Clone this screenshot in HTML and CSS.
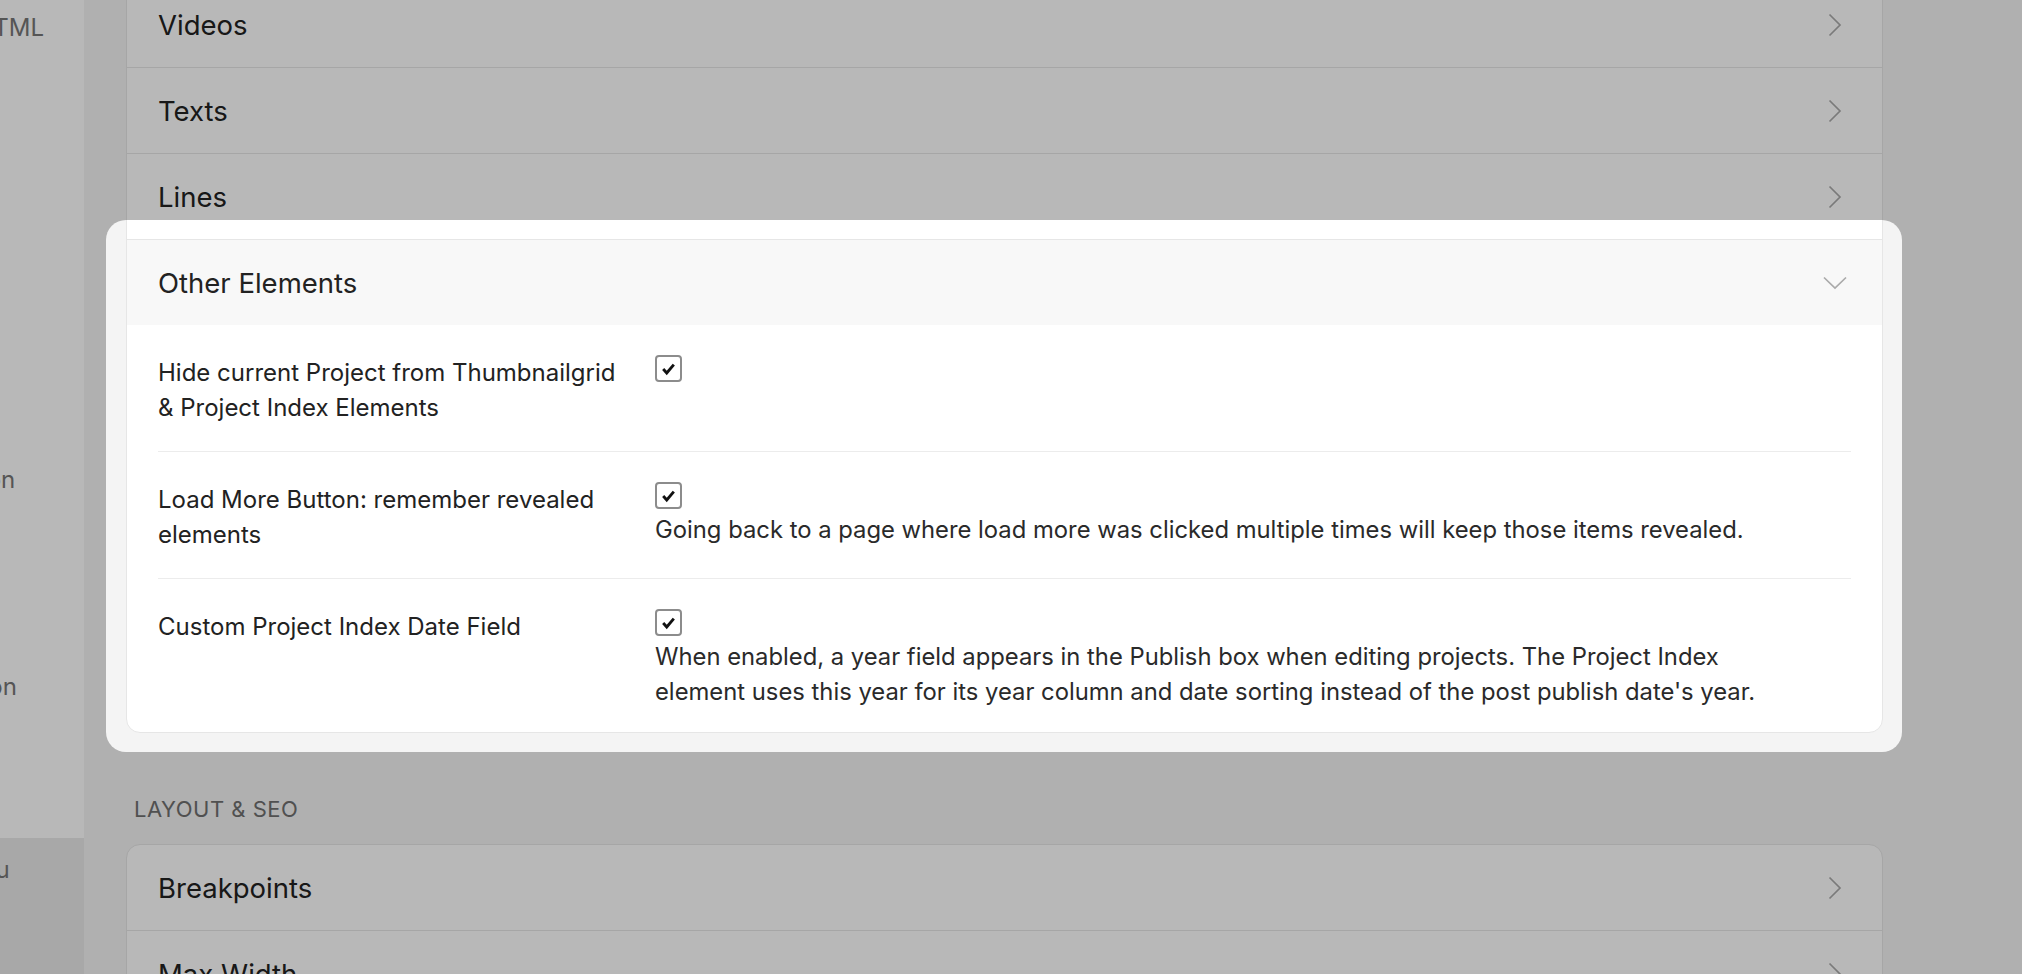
FILE: index.html
```html
<!DOCTYPE html>
<html>
<head>
    <title>Settings - Elements</title>
    <meta name="viewport" content="width=device-width, initial-scale=1">
    <link rel="stylesheet" href="styles.css">
</head>
<body>
    <div class="app">
        <aside class="sidebar">
            <nav class="side-nav">
                <div class="side-item">Footer HTML</div>
                <div class="side-item">Pagination</div>
                <div class="side-item">Navigation</div>
                <div class="side-item active">Site Menu</div>
            </nav>
        </aside>

        <main class="content">
            <div class="panel panel-scrolled">
                <div class="acc-row">
                    <span>Videos</span>
                    <svg class="chev" viewBox="0 0 24 24"><path d="M6.5 1.5 L17 12 L6.5 22.5"/></svg>
                </div>
                <div class="acc-row">
                    <span>Texts</span>
                    <svg class="chev" viewBox="0 0 24 24"><path d="M6.5 1.5 L17 12 L6.5 22.5"/></svg>
                </div>
                <div class="acc-row">
                    <span>Lines</span>
                    <svg class="chev" viewBox="0 0 24 24"><path d="M6.5 1.5 L17 12 L6.5 22.5"/></svg>
                </div>

                <section class="acc-open">
                    <div class="spotlight"></div>
                    <div class="acc-head">
                        <span>Other Elements</span>
                        <svg class="chev" viewBox="0 0 24 24"><path d="M1 6.5 L12 17 L23 6.5"/></svg>
                    </div>
                    <div class="acc-body">
                        <div class="setting">
                            <div class="setting-label">Hide current Project from Thumbnailgrid &amp; Project Index Elements</div>
                            <div class="setting-control">
                                <span class="check"><svg viewBox="0 0 26 26"><path d="M7 13 L11 17.5 L19 8"/></svg></span>
                            </div>
                        </div>
                        <div class="setting">
                            <div class="setting-label">Load More Button: remember revealed elements</div>
                            <div class="setting-control">
                                <span class="check"><svg viewBox="0 0 26 26"><path d="M7 13 L11 17.5 L19 8"/></svg></span>
                                <p class="desc">Going back to a page where load more was clicked multiple times will keep those items revealed.</p>
                            </div>
                        </div>
                        <div class="setting">
                            <div class="setting-label">Custom Project Index Date Field</div>
                            <div class="setting-control">
                                <span class="check"><svg viewBox="0 0 26 26"><path d="M7 13 L11 17.5 L19 8"/></svg></span>
                                <p class="desc">When enabled, a year field appears in the Publish box when editing projects. The Project Index element uses this year for its year column and date sorting instead of the post publish date's year.</p>
                            </div>
                        </div>
                    </div>
                </section>
            </div>

            <h3 class="group-title">Layout &amp; SEO</h3>
            <div class="panel">
                <div class="acc-row">
                    <span>Breakpoints</span>
                    <svg class="chev" viewBox="0 0 24 24"><path d="M6.5 1.5 L17 12 L6.5 22.5"/></svg>
                </div>
                <div class="acc-row">
                    <span>Max Width</span>
                    <svg class="chev" viewBox="0 0 24 24"><path d="M6.5 1.5 L17 12 L6.5 22.5"/></svg>
                </div>
            </div>
        </main>
    </div>
</body>
</html>
```

FILE: styles.css
```css
* {
    box-sizing: border-box;
}
body {
    margin: 0;
    background: #f4f4f4;
    color: #222;
    font-family: Inter, "Noto Sans", sans-serif;
    overflow: hidden;
}
.app {
    display: flex;
    height: 100vh;
}

/* sidebar, mostly scrolled out of view */
.sidebar {
    width: 84px;
    flex: none;
    background: #fff;
    overflow: hidden;
}
.side-nav {
    width: 194px;
    margin-left: -110px;
    padding-top: 5px;
}
.side-item {
    padding-left: 6px;
    font-size: 24px;
    line-height: 46px;
    color: #777;
    white-space: nowrap;
}
.side-item:nth-child(2) {
    margin-top: 406px;
}
.side-item:nth-child(3) {
    margin-top: 161px;
}
.side-item:nth-child(4) {
    margin-top: 128px;
}
.side-item.active {
    background: #e9e9e9;
    padding-top: 9px;
    padding-bottom: 200px;
}

.content {
    flex: 1;
    padding: 0 139px 0 42px;
}
.panel {
    background: #fff;
    border: 1px solid #e6e6e6;
    border-radius: 14px;
}
.panel-scrolled {
    margin-top: -19px;
}
.acc-row,
.acc-head {
    display: flex;
    align-items: center;
    justify-content: space-between;
    height: 86px;
    padding: 0 35px 0 31px;
    border-bottom: 1px solid #e6e6e6;
    font-size: 27.5px;
}
.acc-row:last-child {
    border-bottom: none;
}
.acc-head {
    height: 85px;
    border-bottom: none;
    background: #f8f8f8;
}
.chev {
    width: 24px;
    height: 24px;
    fill: none;
    stroke: #aaa;
    stroke-width: 1.7;
}

.acc-open {
    position: relative;
}
/* dim everything except the open section */
.spotlight {
    position: absolute;
    top: -20px;
    bottom: -20px;
    left: -21px;
    right: -20px;
    border-radius: 20px;
    box-shadow: 0 0 0 4000px rgba(0, 0, 0, 0.28);
    pointer-events: none;
    z-index: 10;
}
.acc-body {
    padding: 0 31px;
}
.setting {
    display: grid;
    grid-template-columns: 465px 1fr;
    column-gap: 32px;
    padding: 30px 0 26px;
    border-bottom: 1px solid #ececec;
    font-size: 24px;
    line-height: 35px;
}
.setting:last-child {
    border-bottom: none;
    padding-bottom: 23px;
}
.check {
    display: flex;
    align-items: center;
    justify-content: center;
    width: 27px;
    height: 27px;
    margin-bottom: 3px;
    border: 2px solid #8c8c8c;
    border-radius: 4px;
    background: #fff;
}
.check svg {
    width: 26px;
    height: 26px;
    fill: none;
    stroke: #111;
    stroke-width: 3.2;
}
.desc {
    margin: 0;
    max-width: 1120px;
    font-size: 23.8px;
    color: #2a2a2a;
}

.group-title {
    margin: 62px 0 21px;
    padding-left: 8px;
    font-size: 22px;
    line-height: 28px;
    font-weight: 400;
    letter-spacing: 0.5px;
    text-transform: uppercase;
    color: #707070;
}
```
